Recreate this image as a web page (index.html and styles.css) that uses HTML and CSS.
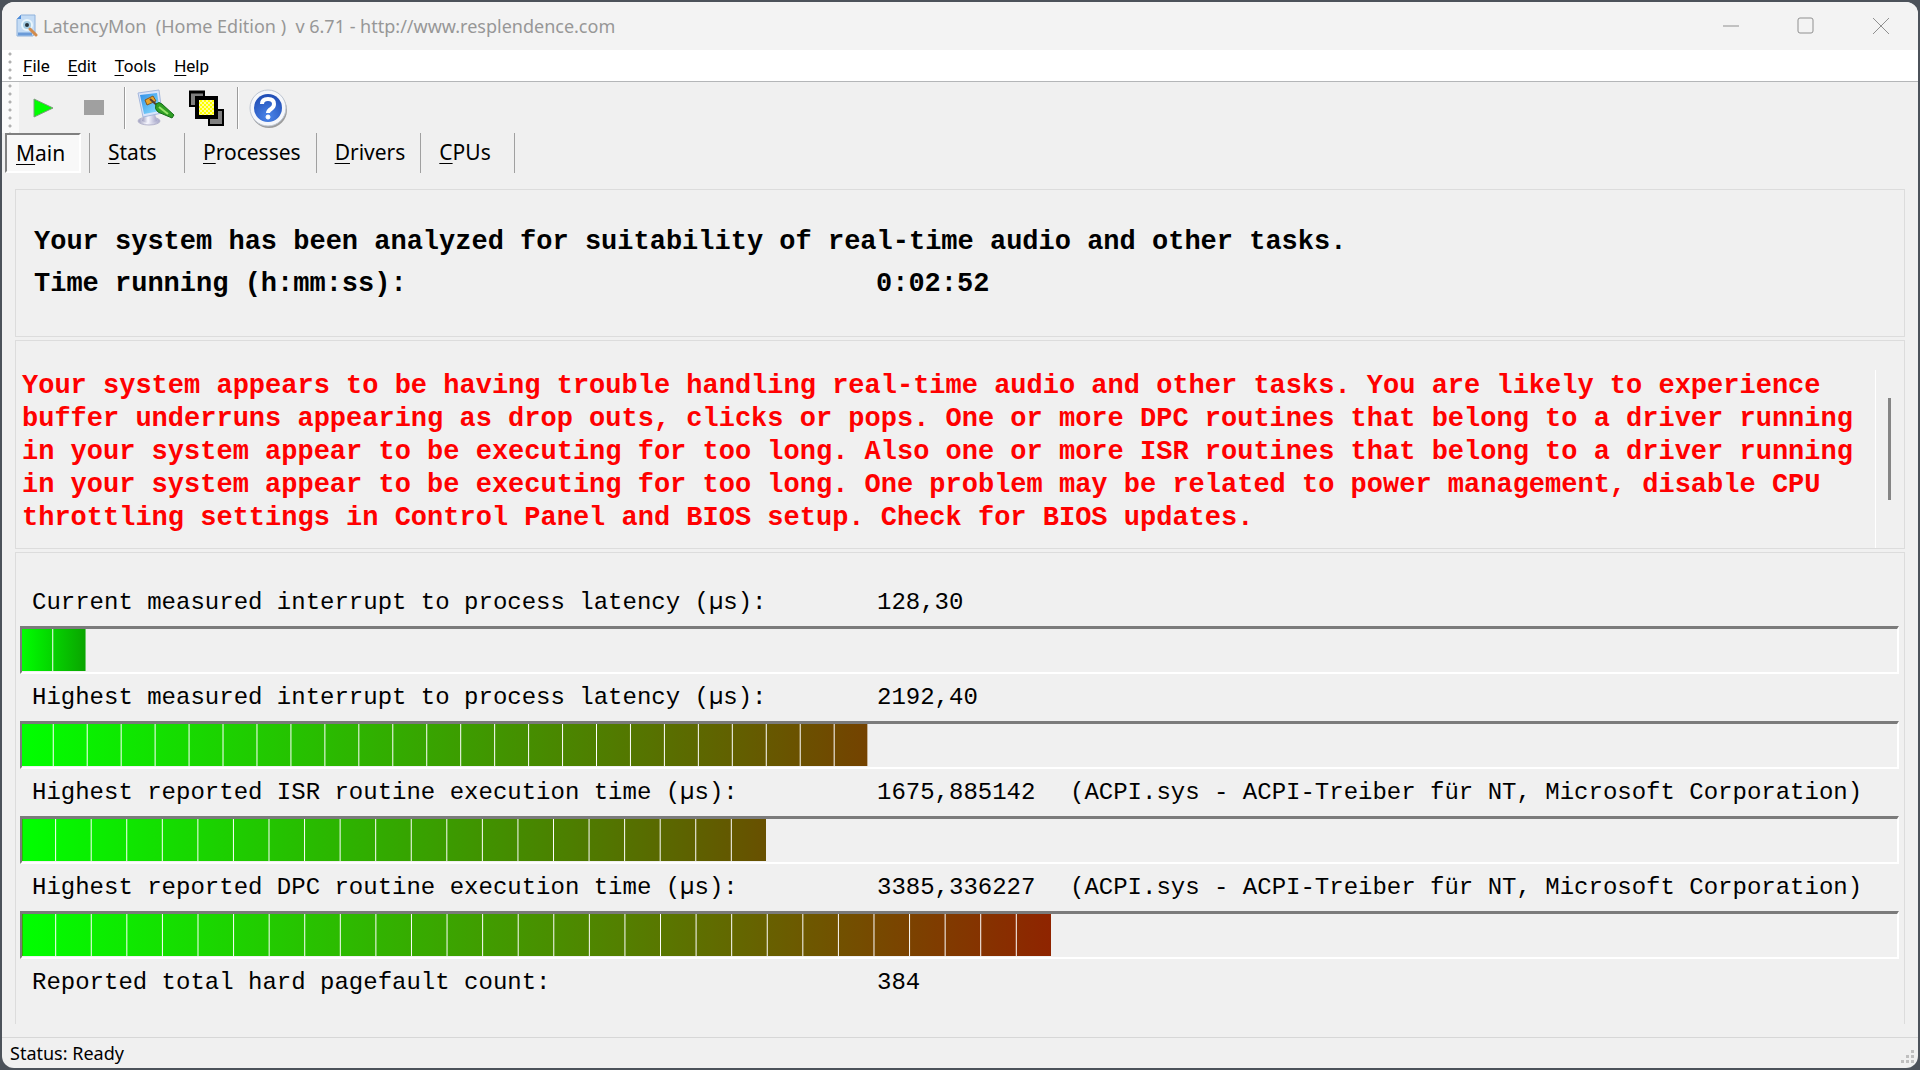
FILE: index.html
```html
<!DOCTYPE html>
<html lang="en">

<head>
    <meta charset="UTF-8">
    <meta name="viewport" content="width=device-width, initial-scale=1.0">
    <title>LatencyMon</title>
    <link rel="stylesheet" href="styles.css">
</head>

<body>
    <div class="window">
        <header class="titlebar">
            <svg class="app-icon" viewBox="0 0 22 24" aria-hidden="true">
                <path d="M5 1h14v18l-2 3H1V5z" fill="#c4dcf5" stroke="#8fb2dc" />
                <path d="M1 5l4-4v4z" fill="#4f8ddb" />
                <path d="M2 20h14" stroke="#6b9bd8" stroke-width="3" />
                <circle cx="11" cy="11" r="5" fill="#a5cbe0" stroke="#e9f5fc" stroke-width="2" />
                <circle cx="11" cy="11" r="2" fill="#26343d" />
                <path d="M14 15l6 6" stroke="#d28b4c" stroke-width="3" stroke-linecap="round" />
            </svg>
            <h1 class="title">LatencyMon&nbsp; (Home Edition )&nbsp; v 6.71 - http://www.resplendence.com</h1>
            <div class="window-buttons">
                <button type="button" aria-label="Minimize">
                    <svg viewBox="0 0 18 18"><path d="M1 9h16" /></svg>
                </button>
                <button type="button" aria-label="Maximize">
                    <svg viewBox="0 0 18 18"><rect x="1" y="1" width="15" height="15" rx="2" /></svg>
                </button>
                <button type="button" aria-label="Close">
                    <svg viewBox="0 0 18 18"><path d="M1 1l16 16M17 1L1 17" /></svg>
                </button>
            </div>
        </header>

        <nav class="menubar">
            <button type="button"><u>F</u>ile</button>
            <button type="button"><u>E</u>dit</button>
            <button type="button"><u>T</u>ools</button>
            <button type="button"><u>H</u>elp</button>
        </nav>

        <div class="toolbar">
            <button type="button" aria-label="Start">
                <svg viewBox="0 0 40 40"><path d="M12 11v18l19-9z" fill="#00ff00" stroke="#7c9c7c" /></svg>
            </button>
            <button type="button" aria-label="Stop">
                <svg viewBox="0 0 40 40"><path d="M11 12h20v15H11z" fill="#a0a0a0" /></svg>
            </button>
            <span class="divider"></span>
            <button type="button" aria-label="Options">
                <svg viewBox="0 0 40 40">
                    <defs>
                        <linearGradient id="screen" x1="0" y1="0" x2="1" y2="1">
                            <stop offset="0" stop-color="#2f8fe8" />
                            <stop offset="1" stop-color="#8fe4ff" />
                        </linearGradient>
                        <linearGradient id="stand" x1="0" x2="1">
                            <stop offset="0" stop-color="#9a9abb" />
                            <stop offset="0.4" stop-color="#f8f8ff" />
                            <stop offset="1" stop-color="#a5a5c8" />
                        </linearGradient>
                    </defs>
                    <ellipse cx="14" cy="33" rx="11" ry="4" fill="url(#stand)" stroke="#b4b4cc" />
                    <path d="M9 26h11l2 7q-8 4-15 0z" fill="url(#stand)" />
                    <path d="M3 5l21-3 3 23-19 4z" fill="#d9e4fa" stroke="#a5b8dd" />
                    <path d="M5 7l17-2 3 18-16 3z" fill="url(#screen)" />
                    <path d="M10 12l8-4 3 5-9 4z" fill="#e8a32a" stroke="#85571c" />
                    <path d="M15 11l9 8" stroke="#573f35" stroke-width="2" />
                    <path d="M21 16q3-3 6 0l12 11-2 3-14-6q-4-3-2-8z" fill="#2f9f24" stroke="#156b18" />
                    <path d="M24 19l9 7" stroke="#98e36c" stroke-width="2" />
                </svg>
            </button>
            <button type="button" aria-label="Windows">
                <svg viewBox="0 0 40 40">
                    <defs>
                        <pattern id="checks" width="4" height="4" patternUnits="userSpaceOnUse">
                            <path d="M0 0h4v4H0z" fill="#ffff00" />
                            <path d="M0 0h2v2H0zM2 2h2v2H2z" fill="#ffff9c" />
                        </pattern>
                    </defs>
                    <path d="M4 4h14v14H4z" fill="#808080" stroke="#000" stroke-width="2" />
                    <path d="M3 4h16" stroke="#000" stroke-width="3" />
                    <path d="M23 22h14v15H23z" fill="#808080" stroke="#000" stroke-width="2" />
                    <path d="M11 10h19v19H11z" fill="url(#checks)" stroke="#000" stroke-width="4" />
                </svg>
            </button>
            <span class="divider"></span>
            <button type="button" aria-label="Help">
                <svg viewBox="0 0 40 40">
                    <defs>
                        <radialGradient id="ball" cx="0.5" cy="0.8" r="0.8">
                            <stop offset="0" stop-color="#4c86ea" />
                            <stop offset="1" stop-color="#1f4cb4" />
                        </radialGradient>
                    </defs>
                    <circle cx="21" cy="22" r="18" fill="#9c9c9c" />
                    <circle cx="20" cy="20" r="18" fill="#f5f7fb" stroke="#bcc4d0" />
                    <circle cx="20" cy="20" r="14" fill="url(#ball)" />
                    <path d="M14 16q0-5 6-5t6 5q0 3-3 5t-3 4" fill="none" stroke="#fff" stroke-width="4" />
                    <circle cx="20" cy="29" r="2" fill="#fff" stroke="#fff" />
                </svg>
            </button>
        </div>

        <div class="tabs" role="tablist">
            <button type="button" role="tab" class="tab active" aria-selected="true"><u>M</u>ain</button>
            <button type="button" role="tab" class="tab"><u>S</u>tats</button>
            <button type="button" role="tab" class="tab"><u>P</u>rocesses</button>
            <button type="button" role="tab" class="tab"><u>D</u>rivers</button>
            <button type="button" role="tab" class="tab"><u>C</u>PUs</button>
        </div>

        <main class="content">
            <section class="panel summary">
                <p>Your system has been analyzed for suitability of real-time audio and other tasks.</p>
                <p class="row"><span class="label">Time running (h:mm:ss):</span><span>0:02:52</span></p>
            </section>

            <section class="panel report">
                <p class="message">Your system appears to be having trouble handling real-time audio and other tasks. You are likely to experience buffer underruns appearing as drop outs, clicks or pops. One or more DPC routines that belong to a driver running in your system appear to be executing for too long. Also one or more ISR routines that belong to a driver running in your system appear to be executing for too long. One problem may be related to power management, disable CPU throttling settings in Control Panel and BIOS setup. Check for BIOS updates.</p>
                <div class="scrollbar"><div class="thumb"></div></div>
            </section>

            <section class="panel measures">
                <p class="row"><span class="label">Current measured interrupt to process latency (µs):</span><span>128,30</span></p>
                <div class="track">
                    <div class="fill low" style="width: 3.4%; --cells: 2"></div>
                </div>
                <p class="row"><span class="label">Highest measured interrupt to process latency (µs):</span><span>2192,40</span></p>
                <div class="track">
                    <div class="fill high" style="width: 45.1%; --cells: 25"></div>
                </div>
                <p class="row"><span class="label">Highest reported ISR routine execution time (µs):</span><span class="value">1675,885142</span><span>(ACPI.sys - ACPI-Treiber für NT, Microsoft Corporation)</span></p>
                <div class="track">
                    <div class="fill mid" style="width: 39.7%; --cells: 21"></div>
                </div>
                <p class="row"><span class="label">Highest reported DPC routine execution time (µs):</span><span class="value">3385,336227</span><span>(ACPI.sys - ACPI-Treiber für NT, Microsoft Corporation)</span></p>
                <div class="track">
                    <div class="fill max" style="width: 54.9%; --cells: 29"></div>
                </div>
                <p class="row"><span class="label">Reported total hard pagefault count:</span><span>384</span></p>
            </section>
        </main>

        <footer class="statusbar">
            <span>Status: Ready</span>
            <svg class="grip" viewBox="0 0 14 14" aria-hidden="true">
                <path d="M10 0h3v3h-3zM5 5h3v3H5zM10 5h3v3h-3zM0 10h3v3H0zM5 10h3v3H5zM10 10h3v3h-3z" fill="#bfbfbf" />
            </svg>
        </footer>
    </div>
</body>

</html>
```
FILE: styles.css
```css
* {
    box-sizing: border-box;
}

body {
    margin: 0;
    padding: 2px;
    height: 100vh;
    background-color: #4c525a;
    font-family: "Noto Sans", "Open Sans", sans-serif;
    color: #000;
}

button {
    padding: 0;
    border: none;
    background: none;
    color: inherit;
    font: inherit;
}

p {
    margin: 0;
}

u {
    text-underline-offset: 3px;
    text-decoration-thickness: 1px;
    text-decoration-skip-ink: none;
}

.window {
    display: flex;
    flex-direction: column;
    height: 100%;
    background-color: #f0f0f0;
    border-radius: 12px;
    overflow: hidden;
}

/* title bar */
.titlebar {
    display: flex;
    align-items: center;
    height: 48px;
    padding-left: 14px;
    background-color: #f3f3f3;
}

.app-icon {
    width: 22px;
    height: 24px;
}

.title {
    flex: 1;
    margin: 0 0 0 5px;
    color: #979797;
    font-size: 18px;
    font-weight: normal;
}

.window-buttons {
    display: flex;
}

.window-buttons button {
    display: flex;
    align-items: center;
    justify-content: center;
    width: 75px;
    height: 44px;
}

.window-buttons svg {
    width: 18px;
    height: 18px;
    fill: none;
    stroke: #8f8f8f;
}

/* menu and toolbar, both with a dotted grip on the left */
.menubar,
.toolbar {
    display: flex;
    align-items: center;
    background-image: radial-gradient(circle, #b0b0b0 1px, transparent 2px);
    background-size: 4px 8px;
    background-position: 6px 0;
    background-repeat: repeat-y;
}

.menubar {
    height: 32px;
    gap: 18px;
    padding-left: 21px;
    background-color: #fff;
    border-bottom: 1px solid #b4b6b8;
    font-family: Roboto, "Liberation Sans", sans-serif;
    font-size: 17px;
}

.toolbar {
    height: 51px;
    padding-left: 20px;
    gap: 5px;
    background-image: radial-gradient(circle, #b0b0b0 1px, transparent 2px), linear-gradient(#fafafa, #fafafa);
    background-size: 4px 8px, 17px 100%;
    background-position: 6px 0, 0 0;
}

.toolbar button {
    width: 46px;
    height: 40px;
}

.toolbar svg {
    width: 40px;
    height: 40px;
    display: block;
}

.divider {
    width: 2px;
    height: 42px;
    margin-right: 4px;
    background-color: #9b9b9b;
    border-right: 1px solid #fff;
}

/* tabs */
.tabs {
    display: flex;
    height: 40px;
    padding-left: 3px;
    font-size: 21px;
}

.tab {
    min-width: 94px;
    padding: 0 15px 2px 18px;
    border-right: 1px solid #a0a0a0;
    text-align: left;
}

.tab.active {
    min-width: 76px;
    margin-right: 8px;
    padding: 0 9px;
    background-color: #f8f8f8;
    border: 2px solid #fff;
    border-top-color: #808080;
    border-left-color: #808080;
}

.tab.active + .tab {
    border-left: 1px solid #a0a0a0;
    min-width: 96px;
}

/* main page */
.content {
    display: flex;
    flex: 1;
    flex-direction: column;
    gap: 3px;
    padding: 16px 13px 13px;
    font-family: "Liberation Mono", "Courier New", monospace;
    font-size: 24px;
}

.panel {
    border: 1px solid #dcdcdc;
}

.row {
    display: flex;
    white-space: pre;
}

.label {
    width: 845px;
}

.summary {
    height: 148px;
    padding: 31px 18px;
    font-size: 27px;
    font-weight: bold;
    line-height: 42px;
}

.summary .label {
    width: 842px;
}

.report {
    display: flex;
    height: 209px;
    padding: 29px 13px 0 6px;
    color: #ff0000;
    font-size: 27px;
    font-weight: bold;
    line-height: 33px;
}

.message {
    flex: 1;
}

.scrollbar {
    width: 16px;
    padding: 28px 0 0 12px;
    border-left: 1px solid #fff;
}

.thumb {
    width: 3px;
    height: 102px;
    background-color: #858585;
}

.measures {
    flex: 1;
    padding: 26px 5px 0 4px;
    border-bottom: none;
}

.measures .row {
    height: 47px;
    padding-left: 12px;
    line-height: 48px;
}

.value {
    width: 193px;
}

.track {
    height: 48px;
    padding-bottom: 1px;
    border: 3px solid #fff;
    border-top-color: #7b7b7b;
    border-left: 2px solid #7b7b7b;
    border-right-width: 2px;
    border-bottom-width: 2px;
}

/* one white line in front of each cell, the first cell is a little cut off */
.fill {
    height: 100%;
    background-image: linear-gradient(to right, #fff 1px, transparent 1px), linear-gradient(to right, #00ff00, var(--end));
    background-size: calc((100% + 3px) / var(--cells)) 100%, 100% 100%;
    background-position: right;
}

.fill.low {
    --end: #0aa400;
}

.fill.mid {
    --end: #685000;
}

.fill.high {
    --end: #744200;
}

.fill.max {
    --end: #8f2400;
}

/* status bar */
.statusbar {
    display: flex;
    align-items: center;
    justify-content: space-between;
    height: 31px;
    padding: 0 3px 0 8px;
    border-top: 1px solid #d7d7d7;
    font-size: 18px;
}

.grip {
    align-self: flex-end;
    width: 14px;
    height: 14px;
    margin-bottom: 4px;
}
```
